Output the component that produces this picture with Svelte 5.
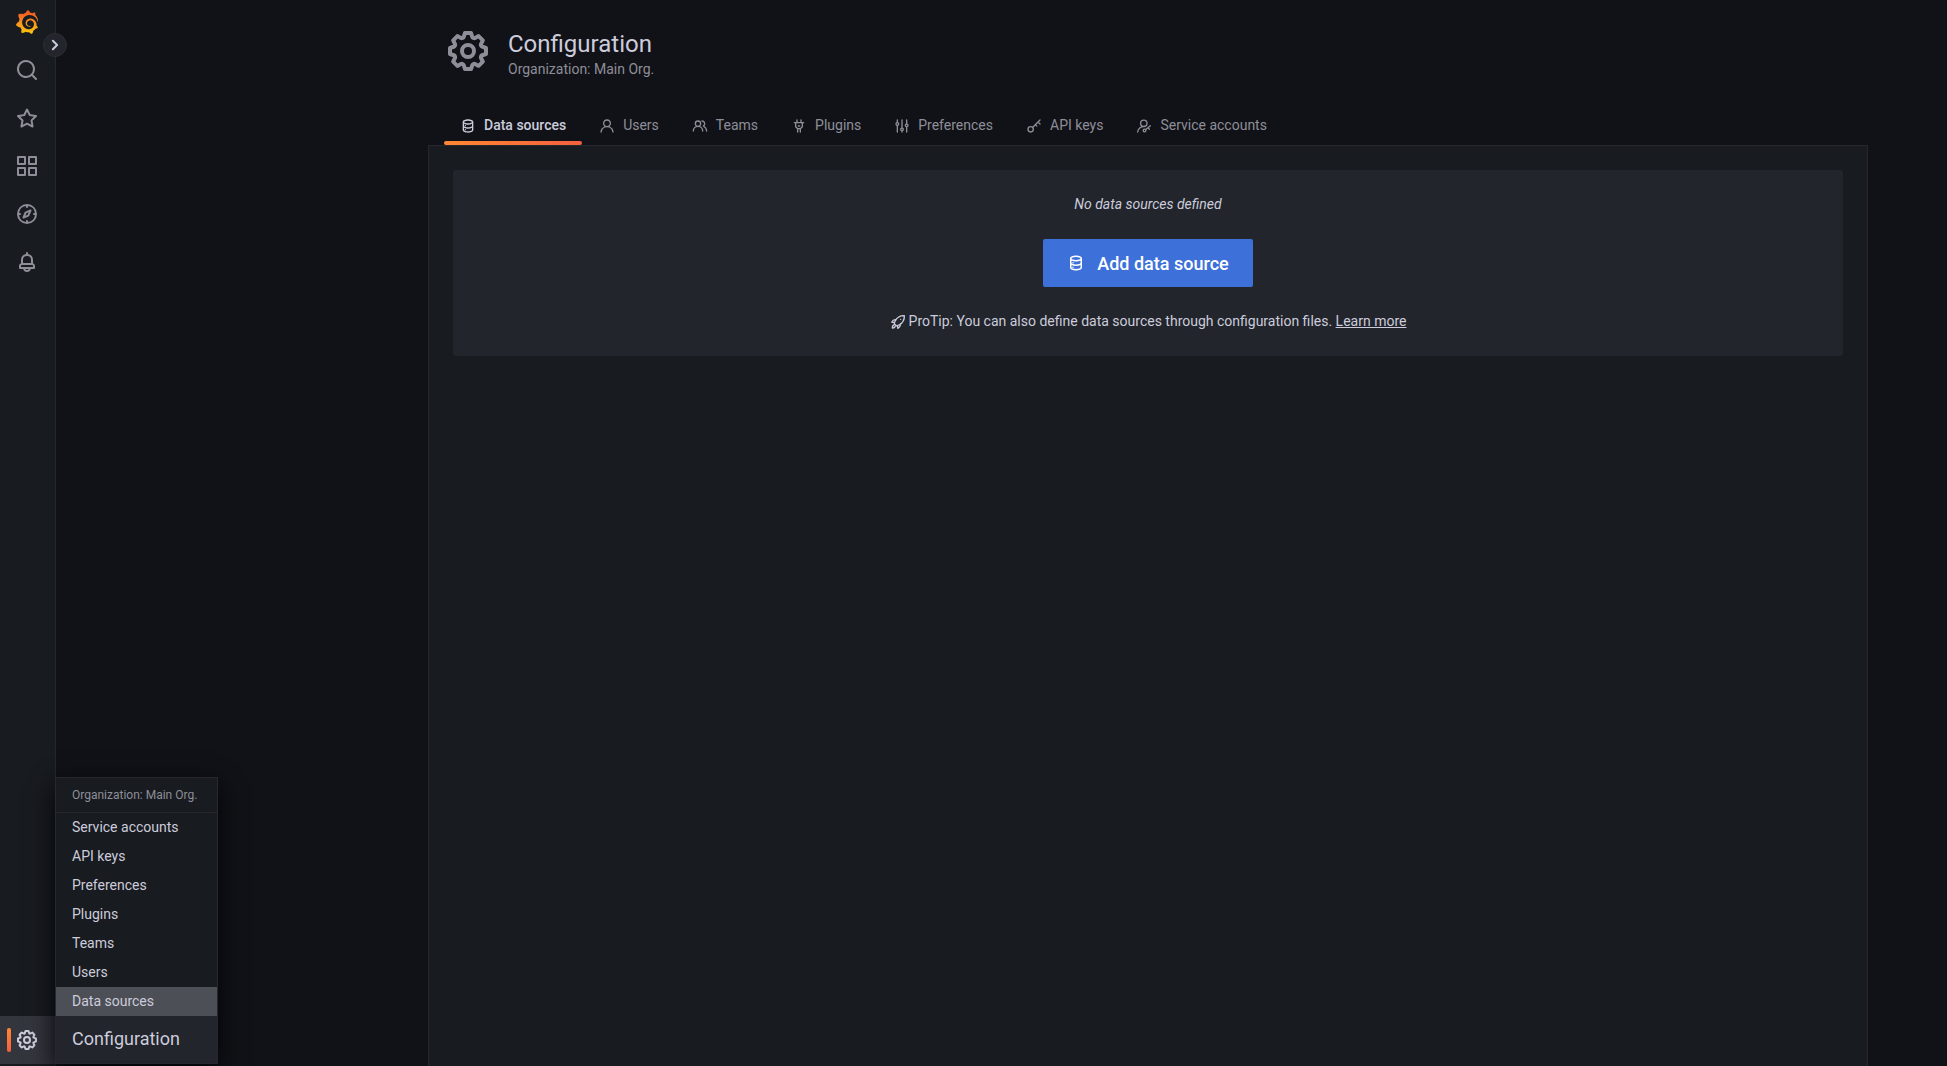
<script>
  const icons = {
    search: 'M21.71,20.29,18,16.61A9,9,0,1,0,16.61,18l3.68,3.68a1,1,0,0,0,1.42,0A1,1,0,0,0,21.71,20.29ZM11,18a7,7,0,1,1,7-7A7,7,0,0,1,11,18Z',
    star: 'M22,9.67A1,1,0,0,0,21.14,9l-5.69-.83L12.9,3a1,1,0,0,0-1.8,0L8.55,8.16,2.86,9a1,1,0,0,0-.81.68,1,1,0,0,0,.25,1l4.13,4-1,5.68A1,1,0,0,0,6.9,21.44L12,18.77l5.1,2.67a.93.93,0,0,0,.46.12,1,1,0,0,0,.59-.19,1,1,0,0,0,.4-1l-1-5.68,4.13-4A1,1,0,0,0,22,9.67Zm-6.15,4a1,1,0,0,0-.29.88l.72,4.2-3.76-2a1.06,1.06,0,0,0-.94,0l-3.76,2,.72-4.2a1,1,0,0,0-.29-.88l-3-3,4.21-.61a1,1,0,0,0,.76-.55L12,5.7l1.88,3.82a1,1,0,0,0,.76.55l4.21.61Z',
    apps: 'M10,13H3a1,1,0,0,0-1,1v7a1,1,0,0,0,1,1h7a1,1,0,0,0,1-1V14A1,1,0,0,0,10,13ZM9,20H4V15H9ZM21,2H14a1,1,0,0,0-1,1v7a1,1,0,0,0,1,1h7a1,1,0,0,0,1-1V3A1,1,0,0,0,21,2ZM20,9H15V4h5Zm1,4H14a1,1,0,0,0-1,1v7a1,1,0,0,0,1,1h7a1,1,0,0,0,1-1V14A1,1,0,0,0,21,13Zm-1,7H15V15h5ZM10,2H3A1,1,0,0,0,2,3v7a1,1,0,0,0,1,1h7a1,1,0,0,0,1-1V3A1,1,0,0,0,10,2ZM9,9H4V4H9Z',
    compass: 'M12,2A10,10,0,1,0,22,12,10,10,0,0,0,12,2Zm1,17.93V19a1,1,0,0,0-2,0v.93A8,8,0,0,1,4.07,13H5a1,1,0,0,0,0-2H4.07A8,8,0,0,1,11,4.07V5a1,1,0,0,0,2,0V4.07A8,8,0,0,1,19.93,11H19a1,1,0,0,0,0,2h.93A8,8,0,0,1,13,19.93ZM15.14,7.55l-5,2.12a1,1,0,0,0-.52.52l-2.12,5a1,1,0,0,0,.21,1.1,1,1,0,0,0,.7.3.93.93,0,0,0,.4-.09l5-2.12a1,1,0,0,0,.52-.52l2.12-5a1,1,0,0,0-1.31-1.31Zm-2.49,5.1-2.28,1,1-2.28,2.28-1Z',
    bell: 'M18,13.18V10a6,6,0,0,0-5-5.91V3a1,1,0,0,0-2,0V4.09A6,6,0,0,0,6,10v3.18A3,3,0,0,0,4,16v2a1,1,0,0,0,1,1H8.14a4,4,0,0,0,7.72,0H19a1,1,0,0,0,1-1V16A3,3,0,0,0,18,13.18ZM8,10a4,4,0,0,1,8,0v3H8Zm4,10a2,2,0,0,1-1.72-1h3.44A2,2,0,0,1,12,20Zm6-3H6V16a1,1,0,0,1,1-1H17a1,1,0,0,1,1,1Z',
    cog: 'M21.32,9.55l-1.89-.63.89-1.78A1,1,0,0,0,20.13,6L18,3.87a1,1,0,0,0-1.15-.19l-1.78.89-.63-1.89A1,1,0,0,0,13.5,2h-3a1,1,0,0,0-.95.68L8.92,4.57,7.14,3.68A1,1,0,0,0,6,3.87L3.87,6a1,1,0,0,0-.19,1.15l.89,1.78-1.89.63A1,1,0,0,0,2,10.5v3a1,1,0,0,0,.68.95l1.89.63-.89,1.78A1,1,0,0,0,3.87,18L6,20.13a1,1,0,0,0,1.15.19l1.78-.89.63,1.89a1,1,0,0,0,.95.68h3a1,1,0,0,0,.95-.68l.63-1.89,1.78.89A1,1,0,0,0,18,20.13L20.13,18a1,1,0,0,0,.19-1.15l-.89-1.78,1.89-.63A1,1,0,0,0,22,13.5v-3A1,1,0,0,0,21.32,9.55ZM20,12.78l-1.2.4A2,2,0,0,0,17.64,16l.57,1.14-1.1,1.1L16,17.64a2,2,0,0,0-2.79,1.16l-.4,1.2H11.22l-.4-1.2A2,2,0,0,0,8,17.64l-1.14.57-1.1-1.1L6.36,16A2,2,0,0,0,5.2,13.18L4,12.78V11.22l1.2-.4A2,2,0,0,0,6.36,8L5.79,6.89l1.1-1.1L8,6.36A2,2,0,0,0,10.82,5.2l.4-1.2h1.56l.4,1.2A2,2,0,0,0,16,6.36l1.14-.57,1.1,1.1L17.64,8a2,2,0,0,0,1.16,2.79l1.2.4ZM12,8a4,4,0,1,0,4,4A4,4,0,0,0,12,8Zm0,6a2,2,0,1,1,2-2A2,2,0,0,1,12,14Z',
    angle: 'M14.83,11.29,10.59,7.05a1,1,0,0,0-1.42,0,1,1,0,0,0,0,1.41L12.71,12,9.17,15.54a1,1,0,0,0,0,1.41,1,1,0,0,0,.71.29,1,1,0,0,0,.71-.29l4.24-4.24A1,1,0,0,0,14.83,11.29Z',
    database: 'M8,16.5a1,1,0,1,0,1,1A1,1,0,0,0,8,16.5ZM12,2C8,2,4,3.37,4,6V18c0,2.63,4,4,8,4s8-1.37,8-4V6C20,3.37,16,2,12,2Zm6,16c0,.71-2.28,2-6,2s-6-1.29-6-2V14.73A13.16,13.16,0,0,0,12,16a13.16,13.16,0,0,0,6-1.27Zm0-6c0,.71-2.28,2-6,2s-6-1.29-6-2V8.73A13.16,13.16,0,0,0,12,10a13.16,13.16,0,0,0,6-1.27ZM12,8C8.28,8,6,6.71,6,6s2.28-2,6-2,6,1.29,6,2S15.72,8,12,8ZM8,10.5a1,1,0,1,0,1,1A1,1,0,0,0,8,10.5Z',
    user: 'M15.71,12.71a6,6,0,1,0-7.42,0,10,10,0,0,0-6.22,8.18,1,1,0,0,0,2,.22,8,8,0,0,1,15.9,0,1,1,0,0,0,1,.89h.11a1,1,0,0,0,.88-1.1A10,10,0,0,0,15.71,12.71ZM12,12a4,4,0,1,1,4-4A4,4,0,0,1,12,12Z',
    users: 'M12.3,12.22A4.92,4.92,0,0,0,14,8.5a5,5,0,0,0-10,0,4.92,4.92,0,0,0,1.7,3.72A8,8,0,0,0,1,19.5a1,1,0,0,0,2,0,6,6,0,0,1,12,0,1,1,0,0,0,2,0A8,8,0,0,0,12.3,12.22ZM9,11.5a3,3,0,1,1,3-3A3,3,0,0,1,9,11.5Zm9.74.32A5,5,0,0,0,15,3.5a1,1,0,0,0,0,2,3,3,0,0,1,3,3,3,3,0,0,1-1.5,2.59,1,1,0,0,0-.5.84,1,1,0,0,0,.45.86l.39.26.13.07a7,7,0,0,1,4,6.38,1,1,0,0,0,2,0A9,9,0,0,0,18.74,11.82Z',
    plug: 'M19,6H16V3a1,1,0,0,0-2,0V6H10V3A1,1,0,0,0,8,3V6H5A1,1,0,0,0,5,8H6v5a1,1,0,0,0,.29.71L9,16.41V21a1,1,0,0,0,2,0V17h2v4a1,1,0,0,0,2,0V16.41l2.71-2.7A1,1,0,0,0,18,13V8h1a1,1,0,0,0,0-2Zm-3,6.59L13.59,15H10.41L8,12.59V8h8ZM11,13h2a1,1,0,0,0,0-2H11a1,1,0,0,0,0,2Z',
    sliders: 'M20,8.18V3a1,1,0,0,0-2,0V8.18a3,3,0,0,0,0,5.64V21a1,1,0,0,0,2,0V13.82a3,3,0,0,0,0-5.64ZM19,12a1,1,0,1,1,1-1A1,1,0,0,1,19,12Zm-6,2.18V3a1,1,0,0,0-2,0V14.18a3,3,0,0,0,0,5.64V21a1,1,0,0,0,2,0V19.82a3,3,0,0,0,0-5.64ZM12,18a1,1,0,1,1,1-1A1,1,0,0,1,12,18ZM6,6.18V3A1,1,0,0,0,4,3V6.18a3,3,0,0,0,0,5.64V21a1,1,0,0,0,2,0V11.82A3,3,0,0,0,6,6.18ZM5,10A1,1,0,1,1,6,9,1,1,0,0,1,5,10Z',
  };

  const strokes = {
    key: 'M11 17a4 4 0 1 1-8 0a4 4 0 0 1 8 0M9.8 14.2L21 3M18 6l3 3M14 10l2.2 2.2',
    account: 'M16.5 8a4.8 4.8 0 1 1-9.6 0a4.8 4.8 0 0 1 9.6 0M2.500 21a9.200 9.200 0 0 1 9.500-8.200M14.800 18.800a2 2 0 1 1-4 0a2 2 0 0 1 4 0M14.300 17.500L21.500 11.500M18 14.500l2 2.300',
    rocket: 'M21.500 2.500C15.500 2.300 10.500 5 7.800 10.500c-.8 1.700-1.300 2.800-1.500 4l3.200 3.200c1.500-.2 3-.8 4.500-1.600C19.500 13 21.800 8.500 21.500 2.500ZM9 8.600C6.300 8 4 9.500 2.500 12.300l4.300.4M15.400 15c.6 2.700-.9 5-3.700 6.500l-.4-4.300M5.800 16.500c-1.700.5-2.500 2-2.300 4.500c2.300.1 3.900-.7 4.300-2.500M16 8h.1',
  };

  const flame =
    'M23.02 10.59a8.578 8.578 0 0 0-.862-3.034 8.911 8.911 0 0 0-1.789-2.445c.337-1.342-.413-2.505-.413-2.505-1.292-.08-2.113.4-2.416.62-.052-.02-.102-.044-.154-.064-.22-.089-.446-.172-.677-.247-.231-.073-.47-.14-.711-.197a9.867 9.867 0 0 0-.875-.161C14.557.753 12.94 0 12.94 0c-1.804 1.145-2.147 2.744-2.147 2.744l-.018.093c-.098.029-.2.057-.298.088-.138.042-.275.094-.413.143-.138.055-.275.107-.41.166a8.869 8.869 0 0 0-1.557.87l-.063-.029c-2.497-.955-4.716.195-4.716.195-.203 2.658.996 4.33 1.235 4.636a11.608 11.608 0 0 0-.607 2.635C1.636 12.677.953 15.014.953 15.014c1.926 2.214 4.171 2.351 4.171 2.351.003-.002.006-.002.006-.005.285.509.615.994.986 1.446.156.19.32.371.488.548-.704 2.009.099 3.68.099 3.68 2.144.08 3.553-.937 3.849-1.173a9.784 9.784 0 0 0 3.164.501h.08l.055-.003.107-.002.103-.005.003.002c1.01 1.44 2.788 1.646 2.788 1.646 1.264-1.332 1.337-2.653 1.337-2.94v-.058c0-.02-.003-.039-.003-.06.265-.187.52-.387.758-.6a7.875 7.875 0 0 0 1.415-1.7c1.43.083 2.437-.885 2.437-.885-.236-1.49-1.085-2.216-1.264-2.354l-.018-.013-.016-.013a.217.217 0 0 1-.031-.02c.008-.092.016-.18.02-.27.011-.162.016-.323.016-.48v-.253l-.005-.098-.008-.135a1.891 1.891 0 0 0-.01-.13c-.003-.042-.008-.083-.013-.125l-.016-.124-.018-.122a6.215 6.215 0 0 0-2.032-3.73 6.015 6.015 0 0 0-3.222-1.46 6.292 6.292 0 0 0-.85-.048l-.107.002h-.063l-.044.003-.104.008a4.777 4.777 0 0 0-3.335 1.695c-.332.4-.592.84-.768 1.297a4.594 4.594 0 0 0-.312 1.817l.003.091c.005.055.007.11.013.164a3.615 3.615 0 0 0 .698 1.82 3.53 3.53 0 0 0 1.827 1.282c.33.098.66.14.971.137.039 0 .078 0 .114-.002l.063-.003c.02 0 .041-.003.062-.003.034-.002.065-.007.099-.01.007 0 .018-.003.028-.003l.031-.005.06-.008a1.18 1.18 0 0 0 .112-.02c.036-.008.072-.013.109-.024a2.634 2.634 0 0 0 .914-.415c.028-.02.056-.041.085-.065a.248.248 0 0 0 .039-.35.244.244 0 0 0-.309-.06l-.078.042c-.09.044-.184.083-.283.116a2.476 2.476 0 0 1-.475.096c-.028.003-.054.006-.083.006l-.083.002c-.026 0-.054 0-.08-.002l-.102-.006h-.012l-.024.006c-.016-.003-.031-.003-.044-.006-.031-.002-.06-.007-.091-.01a2.59 2.59 0 0 1-.724-.213 2.557 2.557 0 0 1-.667-.438 2.52 2.52 0 0 1-.805-1.475 2.306 2.306 0 0 1-.029-.444l.006-.122v-.023l.002-.031c.003-.021.003-.04.005-.06a3.163 3.163 0 0 1 1.352-2.29 3.12 3.12 0 0 1 .937-.43 2.946 2.946 0 0 1 .776-.101h.06l.07.002.045.003h.026l.07.005a4.041 4.041 0 0 1 1.635.49 3.94 3.94 0 0 1 1.602 1.662 3.77 3.77 0 0 1 .397 1.414l.005.076.003.075c.002.026.002.05.002.075 0 .024.003.052 0 .07v.065l-.002.073-.008.174a6.195 6.195 0 0 1-.08.639 5.1 5.1 0 0 1-.267.927 5.31 5.31 0 0 1-.624 1.13 5.052 5.052 0 0 1-3.237 2.014 4.82 4.82 0 0 1-.649.066l-.039.003h-.287a6.607 6.607 0 0 1-1.716-.265 6.776 6.776 0 0 1-3.4-2.274 6.75 6.75 0 0 1-.746-1.15 6.616 6.616 0 0 1-.714-2.596l-.005-.083-.002-.02v-.056l-.003-.073v-.096l-.003-.104v-.07l.003-.163c.008-.22.026-.45.054-.678a8.707 8.707 0 0 1 .28-1.355c.128-.444.286-.872.473-1.277a7.04 7.04 0 0 1 1.456-2.1 5.925 5.925 0 0 1 .953-.763c.169-.111.343-.213.524-.306.089-.05.182-.091.273-.135.047-.02.093-.042.138-.062a7.177 7.177 0 0 1 .714-.267l.145-.045c.049-.015.098-.026.148-.041.098-.029.197-.052.296-.076.049-.013.1-.02.15-.033l.15-.032.151-.028.076-.013.075-.01.153-.024c.057-.01.114-.013.171-.023l.169-.021c.036-.003.073-.008.106-.01l.073-.008.036-.003.042-.002c.057-.003.114-.008.171-.01l.086-.006h.023l.037-.003.145-.007a7.999 7.999 0 0 1 1.708.125 7.917 7.917 0 0 1 2.048.68 8.253 8.253 0 0 1 1.672 1.09l.09.077.089.078c.06.052.114.107.171.159.057.052.112.106.166.16.052.055.107.107.159.164a8.671 8.671 0 0 1 1.41 1.978c.012.026.028.052.04.078l.04.078.075.156c.023.051.05.1.07.153l.065.15a8.848 8.848 0 0 1 .45 1.34.19.19 0 0 0 .201.142.186.186 0 0 0 .172-.184c.01-.246.002-.532-.024-.856z';

  const nav = [
    { label: 'Search', icon: 'search' },
    { label: 'Starred', icon: 'star' },
    { label: 'Dashboards', icon: 'apps' },
    { label: 'Explore', icon: 'compass' },
    { label: 'Alerting', icon: 'bell' },
  ];

  const tabs = [
    { label: 'Data sources', icon: 'database' },
    { label: 'Users', icon: 'user' },
    { label: 'Teams', icon: 'users' },
    { label: 'Plugins', icon: 'plug' },
    { label: 'Preferences', icon: 'sliders' },
    { label: 'API keys', icon: 'key' },
    { label: 'Service accounts', icon: 'account' },
  ];

  const menu = tabs.map((t) => t.label).reverse();
  let active = $state('Data sources');
</script>

{#snippet icon(name, size)}
  <svg class="icon {size}" viewBox="0 0 24 24" aria-hidden="true">
    {#if icons[name]}
      <path d={icons[name]} fill="currentColor" />
    {:else}
      <path d={strokes[name]} class="stroke" />
    {/if}
  </svg>
{/snippet}

<div class="app">
  <nav class="sidebar" aria-label="Main">
    <a class="item logo" href="#home" aria-label="Home">
      <svg class="xl" viewBox="0 0 24 24" aria-hidden="true">
        <defs>
          <linearGradient id="flame" x1="0" y1="1" x2="0" y2="0">
            <stop offset="0" stop-color="#fcc60e" />
            <stop offset="0.4" stop-color="#f99b1c" />
            <stop offset="1" stop-color="#f04e28" />
          </linearGradient>
        </defs>
        <path fill="url(#flame)" d={flame} />
      </svg>
    </a>
    {#each nav as n}
      <a class="item" href="#{n.icon}" aria-label={n.label}>{@render icon(n.icon, 'xl')}</a>
    {/each}
    <div class="config">
      <a class="item current" href="#config" aria-label="Configuration">{@render icon('cog', 'xl')}</a>
      <div class="menu">
        <p>Organization: Main Org.</p>
        <ul>
          {#each menu as m}
            <li><a href="#{m}" class:hover={m === 'Data sources'}>{m}</a></li>
          {/each}
        </ul>
        <a class="head" href="#config">Configuration</a>
      </div>
    </div>
    <button class="toggle" aria-label="Expand menu">{@render icon('angle', 'xl')}</button>
  </nav>

  <main>
    <header>
      {@render icon('cog', 'huge')}
      <div>
        <h1>Configuration</h1>
        <p>Organization: Main Org.</p>
      </div>
    </header>
    <div class="tabs" role="tablist">
      {#each tabs as t}
        <button role="tab" aria-selected={active === t.label} onclick={() => (active = t.label)}>
          {@render icon(t.icon, 'md')}{t.label}
        </button>
      {/each}
    </div>
    <section class="panel">
      <div class="card">
        <em>No data sources defined</em>
        <button class="add">{@render icon('database', 'lg')}Add data source</button>
        <p>
          {@render icon('rocket', 'md')}
          <span>ProTip: You can also define data sources through configuration files. <a href="#docs">Learn more</a></span>
        </p>
      </div>
    </section>
  </main>
</div>

<style>
  :global(body) {
    margin: 0;
    background: #111217;
  }
  .app {
    display: flex;
    min-height: 100vh;
    box-sizing: border-box;
    font: 14px/21px Roboto, sans-serif;
    color: #ccccdc;
    background: #111217;
  }
  a {
    color: inherit;
    text-decoration: none;
  }
  button {
    font: inherit;
    color: inherit;
    border: 0;
    padding: 0;
    background: none;
    cursor: pointer;
  }
  h1,
  p,
  ul {
    margin: 0;
    padding: 0;
  }
  .icon {
    display: block;
    flex: none;
  }
  .md {
    width: 16px;
    height: 16px;
  }
  .lg {
    width: 18px;
    height: 18px;
  }
  .xl {
    width: 24px;
    height: 24px;
  }
  .huge {
    width: 48px;
    height: 48px;
  }
  .stroke {
    fill: none;
    stroke: currentColor;
    stroke-width: 2;
    stroke-linecap: round;
    stroke-linejoin: round;
  }

  .sidebar {
    position: relative;
    z-index: 1;
    flex: none;
    display: flex;
    flex-direction: column;
    box-sizing: border-box;
    width: 56px;
    padding-bottom: 2px;
    background: #181b1f;
    border-right: 1px solid #26282d;
    color: #8e8e99;
  }
  .item {
    display: flex;
    align-items: center;
    justify-content: center;
    height: 48px;
    padding-right: 1px;
  }
  .logo {
    height: 44px;
    padding-bottom: 2px;
  }
  .config {
    position: relative;
    margin-top: auto;
  }
  .current {
    position: relative;
    color: #ccccdc;
    background: #34363d;
  }
  .current::before {
    content: '';
    position: absolute;
    left: 7px;
    top: 12px;
    bottom: 12px;
    width: 4px;
    border-radius: 2px;
    background: linear-gradient(#ff8833, #f55f3e);
  }
  .toggle {
    position: absolute;
    top: 33px;
    right: -12px;
    display: flex;
    align-items: center;
    justify-content: center;
    width: 24px;
    height: 24px;
    border: 1px solid #2c2e33;
    border-radius: 50%;
    background: #22252b;
    color: #ccccdc;
  }
  .menu {
    position: absolute;
    left: 55px;
    bottom: 0;
    min-width: 161px;
    border: 1px solid #26282d;
    background: #181b1f;
    color: #ccccdc;
    box-shadow: 0 8px 24px #010409;
    white-space: nowrap;
  }
  .menu p {
    padding: 6px 16px;
    border-bottom: 1px solid #26282d;
    font-size: 12px;
    line-height: 22px;
    color: #8e8e99;
  }
  .menu ul {
    list-style: none;
  }
  .menu li a {
    display: block;
    height: 29px;
    padding: 0 16px;
    line-height: 29px;
  }
  .menu li .hover {
    background: #4d4f56;
  }
  .menu .head {
    display: block;
    padding: 0 16px 2px;
    background: #22252b;
    font-size: 18px;
    line-height: 45px;
  }

  main {
    flex: 1;
    display: flex;
    flex-direction: column;
    min-width: 0;
    padding: 0 79px 0 372px;
  }
  header {
    display: flex;
    gap: 16px;
    padding: 27px 16px 0;
    height: 81px;
    color: #8e8e99;
  }
  h1 {
    font-size: 24px;
    line-height: 34px;
    font-weight: 400;
    color: #ccccdc;
  }
  header p {
    line-height: 16px;
  }
  .tabs {
    display: flex;
    gap: 1px;
    padding-left: 16px;
  }
  .tabs button {
    position: relative;
    display: flex;
    align-items: center;
    gap: 8px;
    height: 37px;
    padding: 0 16px 2px;
    color: #8e8e99;
  }
  .tabs [aria-selected='true'] {
    color: #ccccdc;
    font-weight: 500;
  }
  .tabs [aria-selected='true']::after {
    content: '';
    position: absolute;
    left: 0;
    right: 0;
    bottom: 0;
    height: 4px;
    border-radius: 2px;
    background: linear-gradient(90deg, #ff8833, #f55f3e);
  }
  .panel {
    flex: 1;
    padding: 24px;
    background: #181b1f;
    border: 1px solid #26282d;
    border-bottom: 0;
  }
  .card {
    display: flex;
    flex-direction: column;
    align-items: center;
    gap: 24px;
    padding: 24px;
    border-radius: 3px;
    background: #22252b;
  }
  .add {
    display: flex;
    align-items: center;
    gap: 12px;
    height: 48px;
    padding: 0 24px;
    border-radius: 2px;
    background: #3d71d9;
    color: #fff;
    font-size: 18px;
    font-weight: 500;
  }
  .card p {
    display: flex;
    align-items: center;
    gap: 3px;
  }
  .card p a {
    text-decoration: underline;
  }
</style>
